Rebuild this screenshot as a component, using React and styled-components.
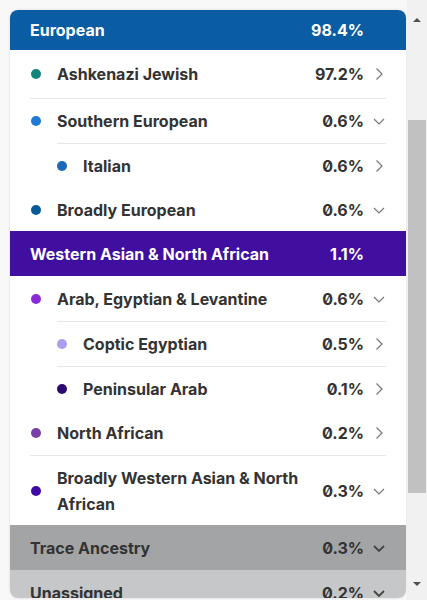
import React from "react";
import styled, { createGlobalStyle } from "styled-components";

const Global = createGlobalStyle`
  html, body { margin: 0; padding: 0; }
  body {
    background: #f8f8f8;
    font-family: Inter, "Open Sans", "Liberation Sans", sans-serif;
    font-feature-settings: "zero" 1;
    overflow: hidden;
  }
`;

const Page = styled.div`
  display: flex;
  width: 427px;
  height: 600px;
`;

const Main = styled.div`
  flex: 1;
  padding: 10px 1px 2px 10px;
  display: flex;
  flex-direction: column;
`;

const Card = styled.div`
  flex: 1;
  background: #ffffff;
  border-radius: 8px;
  overflow: hidden;
  box-shadow: 0 0 3px rgba(0, 0, 0, 0.12);
  display: flex;
  flex-direction: column;
`;

const Header = styled.div`
  display: flex;
  align-items: center;
  height: ${(p) => p.$h}px;
  flex: none;
  padding: 0 42px 0 20px;
  background: ${(p) => p.$bg};
  color: #ffffff;
  font-weight: 700;
  font-size: 16px;
`;

const HeaderName = styled.div`
  flex: 1;
`;

const Row = styled.div`
  display: flex;
  align-items: center;
  flex: none;
  min-height: ${(p) => p.$h || 45}px;
  padding: 0 21px 0 ${(p) => (p.$level === 2 ? 47 : 21)}px;
  color: #333333;
  font-weight: 700;
  font-size: 16px;
`;

const Dot = styled.span`
  width: 10px;
  height: 10px;
  border-radius: 50%;
  background: ${(p) => p.$color};
  flex: none;
  margin-right: 16px;
`;

const Name = styled.div`
  flex: 1;
  line-height: 26px;
  padding-right: 10px;
`;

const Pct = styled.div`
  flex: none;
`;

const Chevron = styled.svg`
  flex: none;
  width: 12px;
  height: 12px;
  margin-left: 9px;
`;

const Divider = styled.div`
  flex: none;
  height: 1px;
  background: #e6e6e6;
  margin: 0 20px 0 ${(p) => p.$indent}px;
`;

const GrayRow = styled.div`
  display: flex;
  align-items: center;
  flex: none;
  height: ${(p) => p.$h}px;
  padding: 0 21px 0 20px;
  background: ${(p) => p.$bg};
  color: #333333;
  font-weight: 700;
  font-size: 16px;
`;

const Scrollbar = styled.div`
  width: 20px;
  flex: none;
  background: #f1f1f1;
  display: flex;
  flex-direction: column;
  align-items: center;
`;

const Arrow = styled.div`
  flex: none;
  width: 0;
  height: 0;
  border-left: 4px solid transparent;
  border-right: 4px solid transparent;
  ${(p) =>
    p.$up
      ? "border-bottom: 4px solid #505050; margin-top: 18px;"
      : "border-top: 4px solid #505050; margin-bottom: 14px;"}
`;

const Thumb = styled.div`
  flex: none;
  width: 18px;
  height: 373px;
  margin-top: 98px;
  background: #c1c1c1;
`;

const Fill = styled.div`
  flex: 1;
`;

function Chev({ dir, dark }) {
  const c = dark ? "#444" : "#777";
  const w = dark ? 1.8 : 1.2;
  return (
    <Chevron viewBox="0 0 12 12">
      {dir === "down" ? (
        <polyline points="1,4 6,9 11,4" fill="none" stroke={c} strokeWidth={w} />
      ) : (
        <polyline points="3.5,0.5 9,6 3.5,11.5" fill="none" stroke={c} strokeWidth={w} />
      )}
    </Chevron>
  );
}

function Item({ level, color, name, pct, dir, h }) {
  return (
    <Row $level={level} $h={h}>
      <Dot $color={color} />
      <Name>{name}</Name>
      <Pct>{pct}</Pct>
      <Chev dir={dir} />
    </Row>
  );
}

export default function App() {
  return (
    <Page>
      <Global />
      <Main>
        <Card>
          <Header $bg="#0a5ca3" $h={40}>
            <HeaderName>European</HeaderName>
            <span>98.4%</span>
          </Header>
          <Item level={1} color="#13857d" name="Ashkenazi Jewish" pct="97.2%" dir="right" h={48} />
          <Divider $indent={20} />
          <Item level={1} color="#1f7ad6" name="Southern European" pct="0.6%" dir="down" h={44} />
          <Divider $indent={47} />
          <Item level={2} color="#1b68bb" name="Italian" pct="0.6%" dir="right" h={44} />
          <Item level={1} color="#0b5a98" name="Broadly European" pct="0.6%" dir="down" h={43} />
          <Header $bg="#400fa0" $h={45}>
            <HeaderName>Western Asian &amp; North African</HeaderName>
            <span>1.1%</span>
          </Header>
          <Item level={1} color="#8a2bd8" name="Arab, Egyptian & Levantine" pct="0.6%" dir="down" h={45} />
          <Divider $indent={47} />
          <Item level={2} color="#a89ff2" name="Coptic Egyptian" pct="0.5%" dir="right" h={44} />
          <Divider $indent={47} />
          <Item level={2} color="#2c0b70" name="Peninsular Arab" pct="0.1%" dir="right" h={43} />
          <Item level={1} color="#7a3ea8" name="North African" pct="0.2%" dir="right" h={45} />
          <Divider $indent={20} />
          <Item level={1} color="#3e0ca4" name="Broadly Western Asian & North African" pct="0.3%" dir="down" h={69} />
          <GrayRow $bg="#a3a4a6" $h={45}>
            <HeaderName>Trace Ancestry</HeaderName>
            <Pct>0.3%</Pct>
            <Chev dir="down" dark />
          </GrayRow>
          <GrayRow $bg="#c6c7c8" $h={45}>
            <HeaderName>Unassigned</HeaderName>
            <Pct>0.2%</Pct>
            <Chev dir="down" dark />
          </GrayRow>
        </Card>
      </Main>
      <Scrollbar>
        <Arrow $up />
        <Thumb />
        <Fill />
        <Arrow />
      </Scrollbar>
    </Page>
  );
}
